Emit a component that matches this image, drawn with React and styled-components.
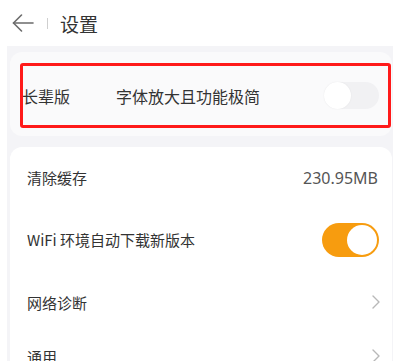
import React, { useState } from 'react'
import styled, { createGlobalStyle } from 'styled-components'

const GlobalStyle = createGlobalStyle`
  body {
    margin: 0;
    background: #ffffff;
    font-family: "Noto Sans CJK SC", "Noto Sans", sans-serif;
    color: #333333;
  }
`

const Page = styled.div`
  width: 400px;
  height: 361px;
  overflow: hidden;
  background: #ffffff;
`

const Header = styled.header`
  height: 46px;
  display: flex;
  align-items: center;
  padding-left: 12px;
`

const Divider = styled.span`
  width: 1px;
  height: 11px;
  background: #cfcfcf;
  margin: 0 12px 0 13px;
`

const Title = styled.h1`
  margin: 0;
  font-size: 19px;
  font-weight: 400;
  color: #333333;
  line-height: 1;
`

const Content = styled.main`
  margin: 0 7px;
  background: #f4f4f7;
  padding: 6px 1px 0 3px;
  display: flex;
  flex-direction: column;
  gap: 11px;
  height: 315px;
`

const Card = styled.section`
  position: relative;
  background: ${({ soft }) => (soft ? '#fafafb' : '#ffffff')};
  border-radius: 12px;
  padding: ${({ soft }) => (soft ? '11px 0 8px' : '0')};
`

const Highlight = styled.div`
  position: absolute;
  left: 10px;
  right: 1px;
  top: 11px;
  bottom: 8px;
  border: 3px solid #ff1a1a;
  border-radius: 3px;
  pointer-events: none;
`

const Row = styled.div`
  height: ${({ h }) => h || 62}px;
  display: flex;
  align-items: center;
  padding: 0 ${({ pr }) => pr ?? 14}px 0 ${({ pl }) => pl ?? 17}px;
  font-size: ${({ big }) => (big ? 16 : 15)}px;
`

const Label = styled.span`
  color: #333333;
  flex: ${({ grow }) => (grow ? 1 : 'none')};
`

const Hint = styled.span`
  flex: 1;
  margin-left: 46px;
  color: #333333;
`

const Value = styled.span`
  color: #555555;
  font-family: "Noto Sans", "Noto Sans CJK SC", sans-serif;
  font-size: 16px;
`

const Track = styled.button`
  position: relative;
  width: ${({ on }) => (on ? 57 : 55)}px;
  height: ${({ on }) => (on ? 34 : 27)}px;
  border: none;
  padding: 0;
  border-radius: 17px;
  background: ${({ on }) => (on ? '#f79c0f' : '#f1f1f3')};
  cursor: pointer;
`

const Knob = styled.span`
  position: absolute;
  top: ${({ on }) => (on ? 2 : 0)}px;
  ${({ on }) => (on ? 'right: 2px;' : 'left: 0;')}
  width: ${({ on }) => (on ? 30 : 27)}px;
  height: ${({ on }) => (on ? 30 : 27)}px;
  border-radius: 50%;
  background: #ffffff;
  box-shadow: ${({ on }) => (on ? 'none' : '0 0 2px rgba(0,0,0,0.06)')};
`

const Switch = ({ on, onToggle }) => (
  <Track on={on ? 1 : 0} onClick={onToggle}>
    <Knob on={on ? 1 : 0} />
  </Track>
)

const BackArrow = () => (
  <svg width="22" height="18" viewBox="0 0 22 18" fill="none" stroke="#6b6b6b" strokeWidth="1.6" strokeLinecap="round" strokeLinejoin="round">
    <path d="M21 9H1.5" />
    <path d="M9.5 1L1.5 9l8 8" />
  </svg>
)

const Chevron = () => (
  <svg width="8" height="14" viewBox="0 0 8 14" fill="none" stroke="#b8b8b8" strokeWidth="1.4" strokeLinecap="round" strokeLinejoin="round">
    <path d="M1 1l6 6-6 6" />
  </svg>
)

const App = () => {
  const [elder, setElder] = useState(false)
  const [wifi, setWifi] = useState(true)

  return (
    <Page>
      <GlobalStyle />
      <Header>
        <BackArrow />
        <Divider />
        <Title>设置</Title>
      </Header>
      <Content>
        <Card soft>
          <Row h={65} pl={12} pr={13} big>
            <Label>长辈版</Label>
            <Hint>字体放大且功能极简</Hint>
            <Switch on={elder} onToggle={() => setElder(!elder)} />
          </Row>
          <Highlight />
        </Card>
        <Card>
          <Row h={61}>
            <Label grow>清除缓存</Label>
            <Value>230.95MB</Value>
          </Row>
          <Row h={63} pr={13}>
            <Label grow>WiFi 环境自动下载新版本</Label>
            <Switch on={wifi} onToggle={() => setWifi(!wifi)} />
          </Row>
          <Row h={62} pr={12}>
            <Label grow>网络诊断</Label>
            <Chevron />
          </Row>
          <Row h={46} pr={12}>
            <Label grow>通用</Label>
            <Chevron />
          </Row>
        </Card>
      </Content>
    </Page>
  )
}

export default App
